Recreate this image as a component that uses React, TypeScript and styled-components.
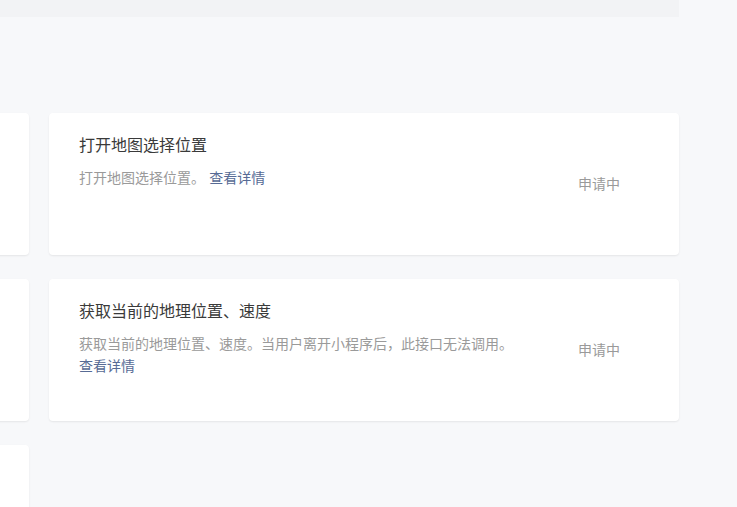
import styled, { createGlobalStyle } from "styled-components";

interface Api {
  id: string;
  title: string;
  desc: string;
  status: string;
}

const apis: Api[] = [
  {
    id: "choosePoi",
    title: "选择位置",
    desc: "打开POI列表选择位置。",
    status: "申请中",
  },
  {
    id: "chooseLocation",
    title: "打开地图选择位置",
    desc: "打开地图选择位置。",
    status: "申请中",
  },
  {
    id: "getFuzzyLocation",
    title: "获取模糊地理位置",
    desc: "获取当前的模糊地理位置。",
    status: "申请中",
  },
  {
    id: "getLocation",
    title: "获取当前的地理位置、速度",
    desc: "获取当前的地理位置、速度。当用户离开小程序后，此接口无法调用。",
    status: "申请中",
  },
  {
    id: "onLocationChange",
    title: "监听实时地理位置变化事件",
    desc: "监听实时地理位置变化事件。",
    status: "申请中",
  },
];

function App() {
  return (
    <>
      <GlobalStyle />
      <Page>
        <Content>
          <TopBar />
          <Grid>
            {apis.map((api) => (
              <Card key={api.id}>
                <Info>
                  <Title>{api.title}</Title>
                  <Desc>
                    {api.desc} <Link href="#detail">查看详情</Link>
                  </Desc>
                </Info>
                <Status>{api.status}</Status>
              </Card>
            ))}
          </Grid>
        </Content>
      </Page>
    </>
  );
}

export default App;

const GlobalStyle = createGlobalStyle`
  html, body {
    margin: 0;
    padding: 0;
    overflow: hidden;
    background: #f7f8fa;
    font-family: "Noto Sans CJK SC", "Liberation Sans", sans-serif;
  }
`;

const Page = styled.div`
  width: 737px;
  height: 507px;
  overflow: hidden;
  background: #f7f8fa;
`;

const Content = styled.div`
  width: 1280px;
  margin-left: -601px;
`;

const TopBar = styled.div`
  height: 17px;
  background: #f2f3f5;
  margin-bottom: 96px;
`;

const Grid = styled.div`
  display: grid;
  grid-template-columns: 630px 630px;
  column-gap: 20px;
  row-gap: 24px;
`;

const Card = styled.div`
  display: flex;
  align-items: center;
  box-sizing: border-box;
  min-height: 142px;
  padding: 19px 59px 20px 30px;
  background: #fff;
  border-radius: 4px;
  box-shadow: 0 1px 2px rgba(0, 0, 0, 0.08);
`;

const Info = styled.div`
  align-self: flex-start;
  width: 450px;
`;

const Title = styled.div`
  font-size: 16px;
  line-height: 24px;
  color: #3a3a3a;
`;

const Desc = styled.div`
  margin-top: 10px;
  font-size: 14px;
  line-height: 22px;
  color: #9a9a9a;
  word-spacing: 1px;
`;

const Link = styled.a`
  color: #576b95;
  text-decoration: none;
`;

const Status = styled.div`
  margin-left: auto;
  margin-top: -1px;
  font-size: 14px;
  color: #9a9a9a;
`;
